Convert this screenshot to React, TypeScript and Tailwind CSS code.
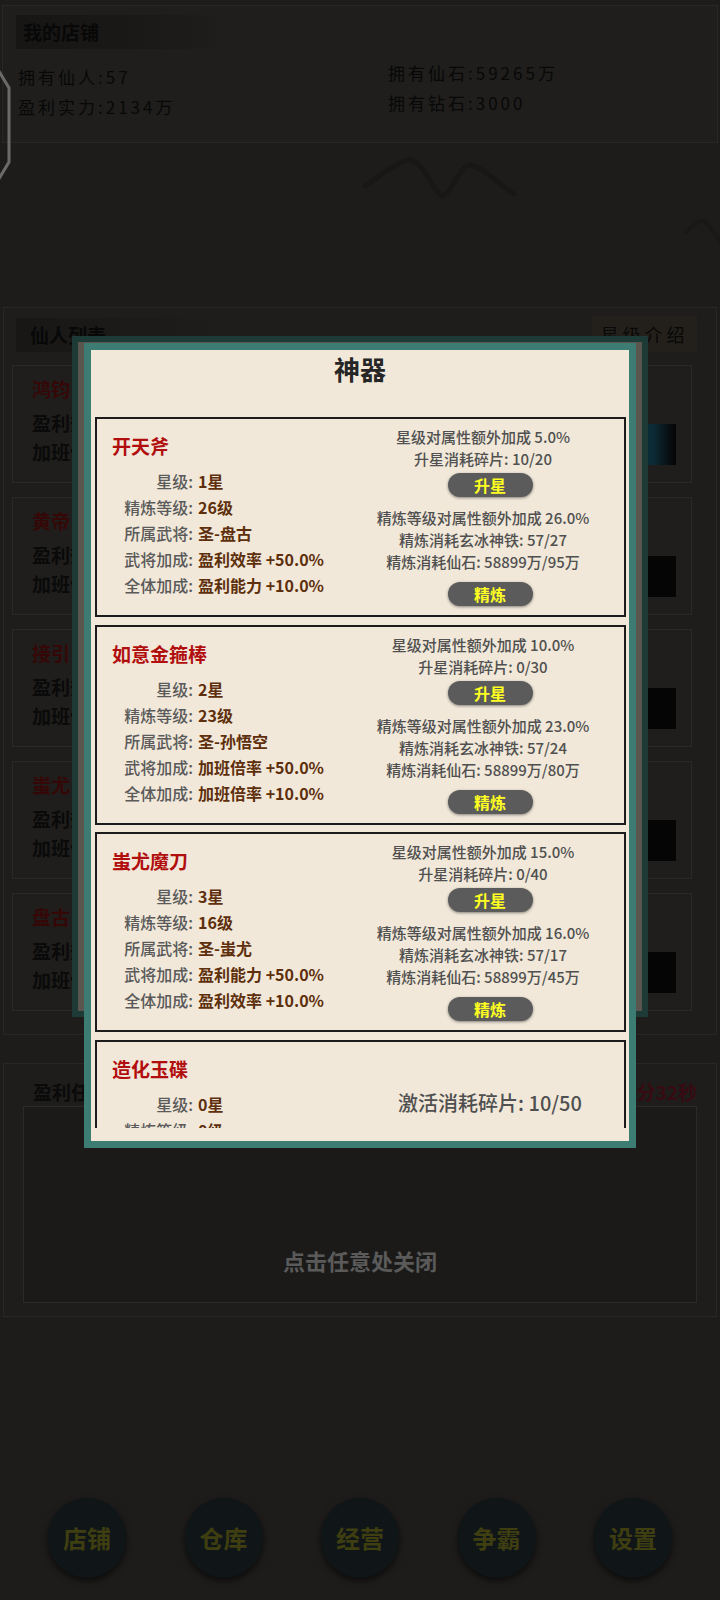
import React from "react";

type Art = {
  name: string;
  star: string;
  level: string;
  owner: string;
  gen: string;
  all: string;
  starBonus: string;
  shard: string;
  refBonus: string;
  iron: string;
  stone: string;
};

const arts: Art[] = [
  { name: "开天斧", star: "1星", level: "26级", owner: "圣-盘古", gen: "盈利效率 +50.0%", all: "盈利能力 +10.0%", starBonus: "5.0%", shard: "10/20", refBonus: "26.0%", iron: "57/27", stone: "58899万/95万" },
  { name: "如意金箍棒", star: "2星", level: "23级", owner: "圣-孙悟空", gen: "加班倍率 +50.0%", all: "加班倍率 +10.0%", starBonus: "10.0%", shard: "0/30", refBonus: "23.0%", iron: "57/24", stone: "58899万/80万" },
  { name: "蚩尤魔刀", star: "3星", level: "16级", owner: "圣-蚩尤", gen: "盈利能力 +50.0%", all: "盈利效率 +10.0%", starBonus: "15.0%", shard: "0/40", refBonus: "16.0%", iron: "57/17", stone: "58899万/45万" },
];

const heroes = ["鸿钧", "黄帝", "接引", "蚩尤", "盘古"];
const navs = ["店铺", "仓库", "经营", "争霸", "设置"];

function Row({ label, value }: { label: string; value: string }) {
  return (
    <div className="flex h-[26px] items-center text-[16px] leading-[20px]">
      <span className="w-[96px] text-right font-medium text-[#5a5a5a]">{label}:</span>
      <span className="ml-[5px] font-semibold text-[#5e2f0c]">{value}</span>
    </div>
  );
}

function Btn({ text }: { text: string }) {
  return (
    <div className="w-[85px] h-[24px] rounded-full bg-[#5b5b5b] text-center text-[16px] leading-[24px] font-bold text-[#ffff22] shadow-[0_1px_3px_rgba(0,0,0,0.45)]">
      {text}
    </div>
  );
}

function Card({ a }: { a: Art }) {
  return (
    <div className="h-[200px] shrink-0 border-2 border-[#1c1c1c] flex">
      <div className="w-[259px] pt-[15px]">
        <div className="pl-[15px] text-[19px] leading-[24px] font-bold text-[#b10e0e]">{a.name}</div>
        <div className="mt-[10px]">
          <Row label="星级" value={a.star} />
          <Row label="精炼等级" value={a.level} />
          <Row label="所属武将" value={a.owner} />
          <Row label="武将加成" value={a.gen} />
          <Row label="全体加成" value={a.all} />
        </div>
      </div>
      <div className="flex-1 flex flex-col items-center pt-[7px] text-[15px] leading-[22px] font-medium text-[#505050]">
        <div className="pr-[14px] whitespace-nowrap">星级对属性额外加成 {a.starBonus}</div>
        <div className="pr-[14px] whitespace-nowrap">升星消耗碎片: {a.shard}</div>
        <div className="mt-[3px]">
          <Btn text="升星" />
        </div>
        <div className="mt-[10px] pr-[14px] whitespace-nowrap">精炼等级对属性额外加成 {a.refBonus}</div>
        <div className="pr-[14px] whitespace-nowrap">精炼消耗玄冰神铁: {a.iron}</div>
        <div className="pr-[14px] whitespace-nowrap">精炼消耗仙石: {a.stone}</div>
        <div className="mt-[9px]">
          <Btn text="精炼" />
        </div>
      </div>
    </div>
  );
}

export default function App() {
  return (
    <div className="relative w-[720px] h-[1600px] overflow-hidden bg-[#1d1c1a] font-['Noto_Sans_CJK_SC',sans-serif]">
      {/* header panel */}
      <div className="mt-[5px] mx-[2px] h-[138px] border border-[#282725] bg-[#1f1e1c] pt-[9px] pl-[13px]">
        <div className="w-[212px] h-[34px] bg-linear-to-r from-[#171615] via-[#191817] to-[#1f1e1c] pl-[7px] text-[19px] font-bold leading-[34px] text-[#080808]">
          我的店铺
        </div>
        <div className="flex pl-[2px] text-[17px] leading-[30px] tracking-[3px] text-[#080808]">
          <div className="w-[370px] mt-[13px]">
            <div>拥有仙人:57</div>
            <div>盈利实力:2134万</div>
          </div>
          <div className="mt-[9px]">
            <div>拥有仙石:59265万</div>
            <div>拥有钻石:3000</div>
          </div>
        </div>
      </div>

      {/* landscape decoration */}
      <div className="h-[164px]">
        <svg width="720" height="164" viewBox="0 143 720 164" className="block">
          <path d="M365 186 C380 176 395 162 410 160 C425 162 432 192 443 196 C452 192 460 166 470 165 C485 168 500 186 514 194" fill="none" stroke="#181715" strokeWidth="5" strokeLinecap="round" />
          <path d="M686 232 C694 224 700 220 704 221 C710 226 716 236 722 242" fill="none" stroke="#191816" strokeWidth="4" strokeLinecap="round" />
        </svg>
      </div>

      {/* list panel */}
      <div className="mx-[3px] h-[728px] border border-[#282725] bg-[#1e1d1b] pt-[10px]">
        <div className="flex justify-between pl-[12px] pr-[19px]">
          <div className="w-[200px] h-[34px] bg-linear-to-r from-[#181716] to-[#1e1d1b] pl-[14px] text-[19px] font-bold leading-[34px] text-[#080808]">
            仙人列表
          </div>
          <div className="w-[105px] h-[36px] -mt-[2px] bg-[#23201b] text-center text-[18px] leading-[36px] tracking-[4px] text-[#080808]">
            星级介绍
          </div>
        </div>
        <div className="mt-[13px] ml-[8px] w-[680px] flex flex-col gap-[14px]">
          {heroes.map((h, i) => (
            <div key={h} className="h-[118px] border border-[#2a2927] bg-[#1f1e1c] flex">
              <div className="flex-1 pt-[10px] pl-[19px]">
                <div className="text-[19px] leading-[26px] font-bold text-[#360707]">{h}</div>
                <div className="mt-[6px] text-[19px] leading-[29px] font-bold text-[#0a0a0a]">
                  <div>盈利效率: 1280万</div>
                  <div>加班倍率: 25%</div>
                </div>
              </div>
              <div
                className={
                  "mt-[58px] mr-[15px] w-[46px] h-[41px] " +
                  (i === 0 ? "bg-linear-to-r from-[#0b2b37] via-[#0b2b37] to-[#050505]" : "bg-[#050505]")
                }
              />
            </div>
          ))}
        </div>
      </div>

      {/* bottom panel */}
      <div className="mt-[28px] mx-[3px] h-[254px] border border-[#282725] bg-[#1e1d1b] pt-[15px]">
        <div className="flex justify-between pl-[29px] pr-[19px] text-[19px] leading-[26px] font-bold">
          <span className="text-[#0a0a0a]">盈利任务</span>
          <span className="text-[#380a11]">倒计时: 15分32秒</span>
        </div>
        <div className="mt-[1px] mx-[19px] h-[197px] border border-[#2b2a28] bg-[#1b1a19]" />
      </div>

      {/* bottom nav */}
      <div className="mt-[181px] flex justify-between px-[48px]">
        {navs.map((n) => (
          <div
            key={n}
            className="w-[78px] h-[80px] rounded-full bg-[#101518] shadow-[0_3px_6px_rgba(0,0,0,0.6)] flex items-center justify-center text-[24px] font-bold text-[#3e3e11]"
          >
            {n}
          </div>
        ))}
      </div>

      {/* floating side hexagon (half offscreen) */}
      <svg className="absolute left-0 top-[66px]" width="14" height="118" viewBox="0 0 14 118">
        <polyline points="-3,2 9,22 9,96 -3,116" fill="none" stroke="#6a6a6a" strokeWidth="3" />
      </svg>

      {/* dimmed underlying dialog */}
      <div className="absolute left-[72px] top-[336px] w-[576px] h-[681px] border-[6px] border-[#1d3a36] bg-[#5a554f]" />

      {/* close hint */}
      <div className="absolute left-0 right-0 top-[1246px] text-center text-[22px] leading-[28px] font-bold text-[#5a5a5a]">
        点击任意处关闭
      </div>

      {/* modal */}
      <div className="absolute left-[84px] top-[343px] w-[552px] h-[805px] border-[7px] border-[#3c7c72] bg-[#f1e8d9] flex flex-col">
        <div className="pt-[2px] text-center text-[26px] leading-[34px] font-bold text-[#262626]">神器</div>
        <div className="mt-[31px] ml-[4px] mr-[3px] h-[711px] overflow-hidden flex flex-col gap-[7.5px]">
          {arts.map((a) => (
            <Card key={a.name} a={a} />
          ))}
          <div className="h-[200px] shrink-0 border-2 border-[#1c1c1c] flex">
            <div className="w-[259px] pt-[15px]">
              <div className="pl-[15px] text-[19px] leading-[24px] font-bold text-[#b10e0e]">造化玉碟</div>
              <div className="mt-[10px]">
                <Row label="星级" value="0星" />
                <Row label="精炼等级" value="0级" />
                <Row label="所属武将" value="圣-鸿钧" />
                <Row label="武将加成" value="盈利效率 +50.0%" />
                <Row label="全体加成" value="盈利能力 +10.0%" />
              </div>
            </div>
            <div className="flex-1 flex flex-col items-center pt-[48px] text-[20px] leading-[26px] font-medium text-[#505050]">
              <div className="whitespace-nowrap">激活消耗碎片: 10/50</div>
            </div>
          </div>
        </div>
      </div>
    </div>
  );
}
